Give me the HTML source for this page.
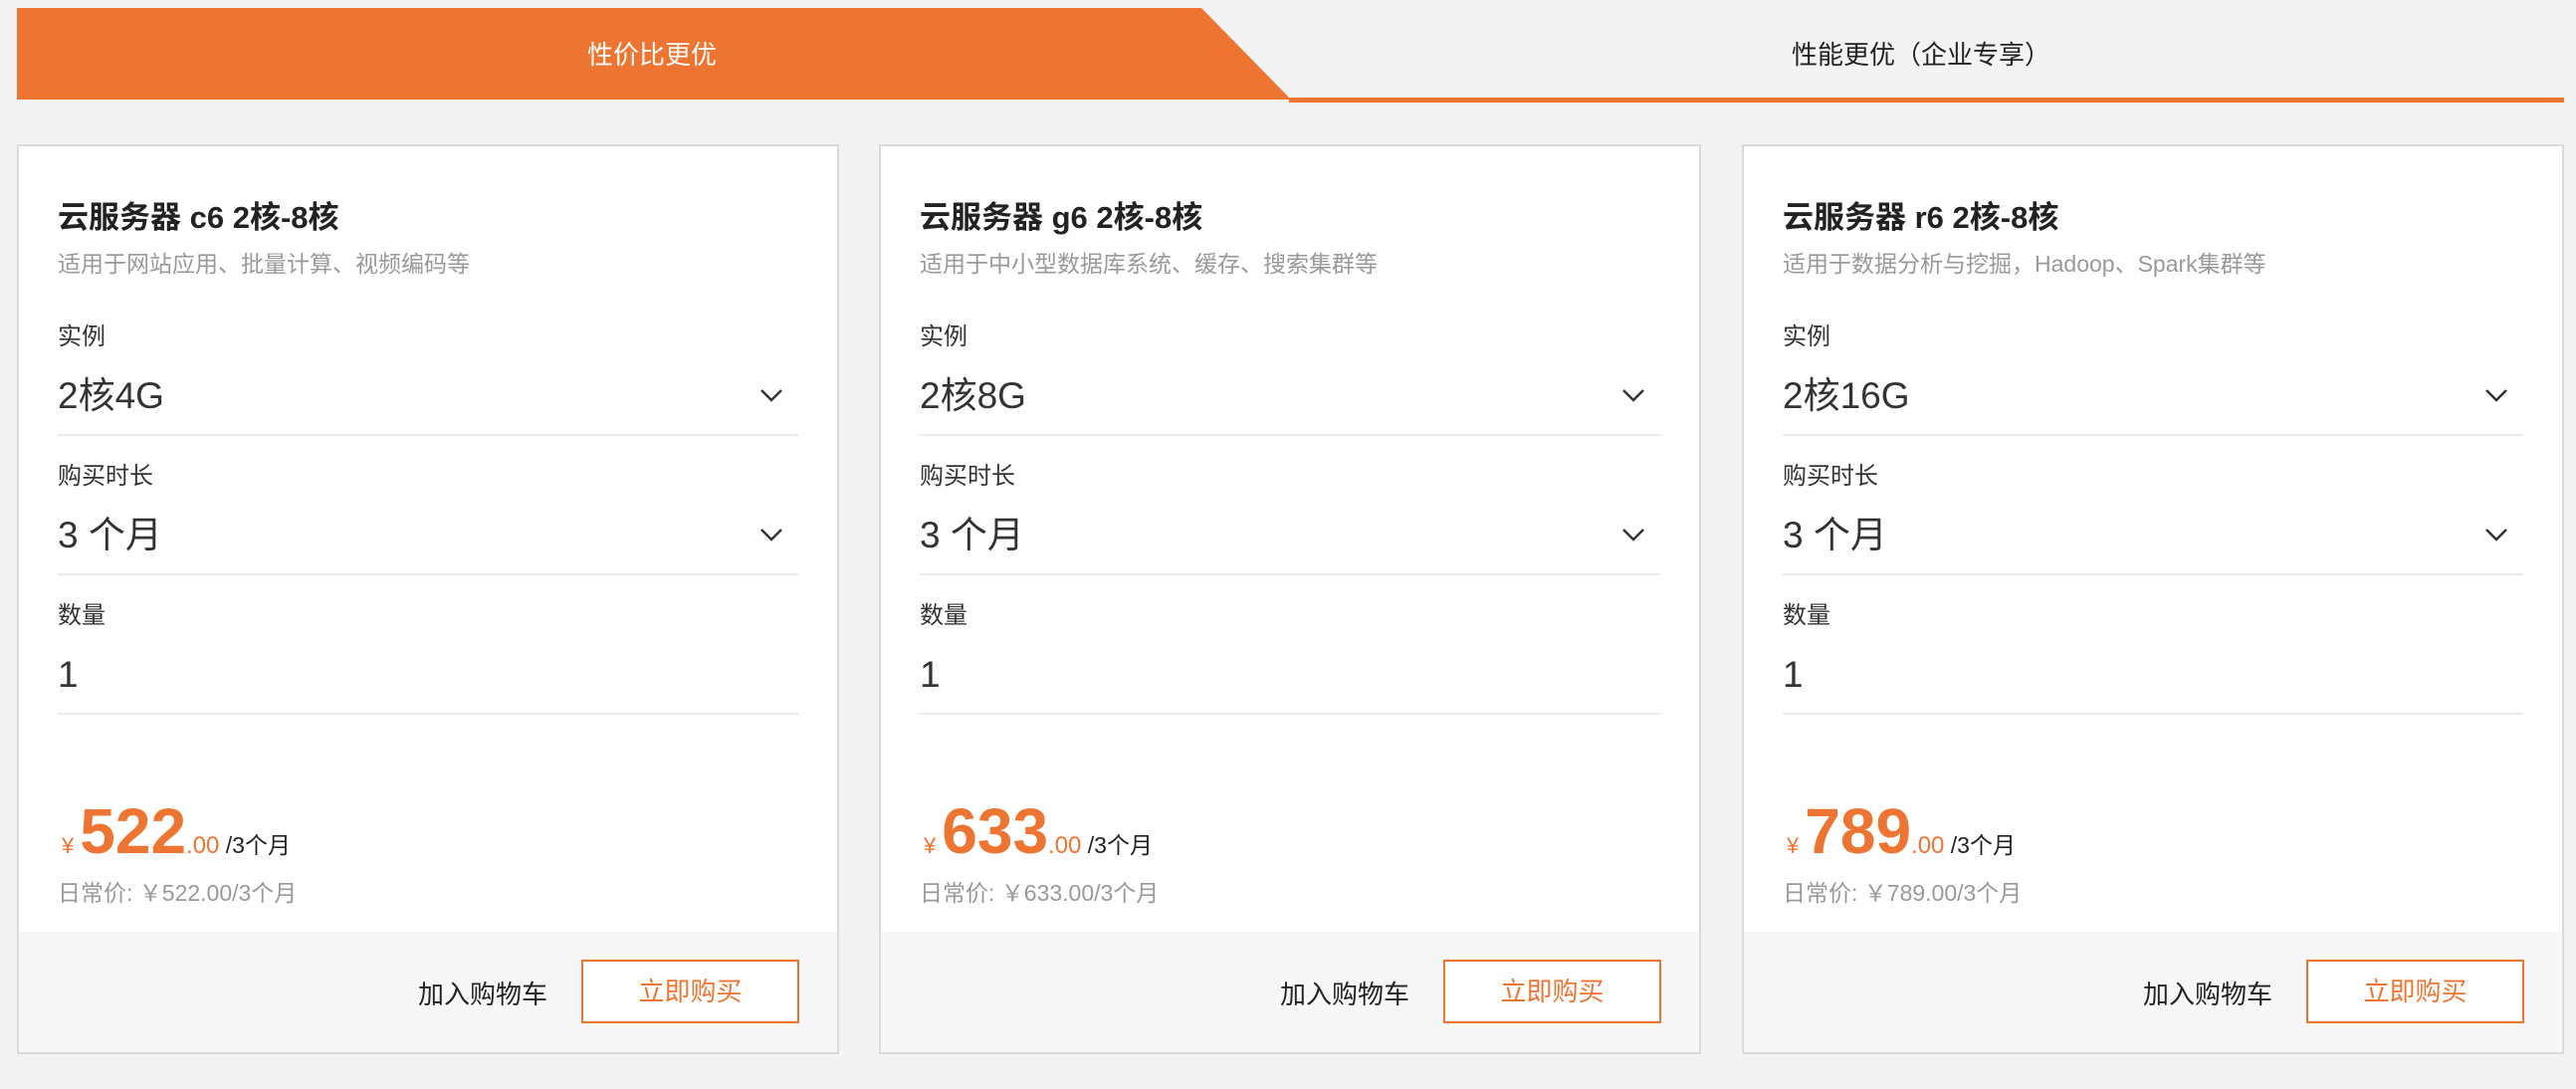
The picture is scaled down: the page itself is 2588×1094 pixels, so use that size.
<!DOCTYPE html>
<html><head><meta charset="utf-8"><style>
*{margin:0;padding:0;box-sizing:border-box}
body{width:2588px;height:1094px;background:#f3f3f3;font-family:"Liberation Sans","Noto Sans CJK SC",sans-serif;position:relative;overflow:hidden;color:#333}
.abs{position:absolute;white-space:nowrap}
.card{position:absolute;top:145px;width:826px;height:914px;background:#fff;border:2px solid #d9d9de}
.foot{position:absolute;left:0;right:0;bottom:0;height:121px;background:#f7f7f7}
.line{position:absolute;left:39px;width:744px;height:2px;background:#eaeaea}
.lbl{position:absolute;left:39px;font-size:24px;color:#333;line-height:1}
.val{position:absolute;left:39px;font-size:37px;color:#333;line-height:1}
.chev{position:absolute;left:744px;width:24px;height:14px}
</style></head><body>
<svg class="abs" style="left:0;top:0" width="2588" height="110">
<polygon points="17,8 1207,8 1297,100 17,100" fill="#ed7431"/>
<rect x="1295" y="98" width="1281" height="5" fill="#ed7431"/>
</svg>
<div class="abs" style="left:0;width:1310px;top:36px;text-align:center;color:#fff;font-size:26px;line-height:38px">性价比更优</div>
<div class="abs" style="left:1700px;width:460px;top:36px;text-align:center;color:#222;font-size:26px;line-height:38px">性能更优（企业专享）</div>

<div class="card" style="left:17px">
<div class="abs" style="left:39px;top:46px;font-size:31px;font-weight:bold;color:#222">云服务器 c6 2核-8核</div>
<div class="abs" style="left:39px;top:99px;font-size:23px;color:#999">适用于网站应用、批量计算、视频编码等</div>
<div class="lbl" style="top:180px">实例</div>
<div class="val" style="top:232px">2核4G</div>
<svg class="chev" style="top:243px"><polyline points="2,2 12,12 22,2" fill="none" stroke="#333" stroke-width="2.5"/></svg>
<div class="line" style="top:289px"></div>
<div class="lbl" style="top:320px">购买时长</div>
<div class="val" style="top:372px">3 个月</div>
<svg class="chev" style="top:383px"><polyline points="2,2 12,12 22,2" fill="none" stroke="#333" stroke-width="2.5"/></svg>
<div class="line" style="top:429px"></div>
<div class="lbl" style="top:460px">数量</div>
<div class="val" style="top:512px">1</div>
<div class="line" style="top:569px"></div>
<div class="abs" style="left:43px;top:656px;line-height:1;color:#ed7431"><span style="font-size:22px">¥</span><span style="font-size:64px;font-weight:bold;margin-left:6px">522</span><span style="font-size:24px">.00</span><span style="font-size:23px;color:#222"> /3个月</span></div>
<div class="abs" style="left:39px;top:731px;font-size:23px;color:#999">日常价: ￥522.00/3个月</div>
<div class="foot">
<div class="abs" style="left:401px;top:43px;font-size:26px;color:#222">加入购物车</div>
<div class="abs" style="left:565px;top:28px;width:219px;height:64px;border:2px solid #ed7431;background:#fff;color:#ed7431;font-size:26px;text-align:center;line-height:60px">立即购买</div>
</div>
</div>

<div class="card" style="left:883px">
<div class="abs" style="left:39px;top:46px;font-size:31px;font-weight:bold;color:#222">云服务器 g6 2核-8核</div>
<div class="abs" style="left:39px;top:99px;font-size:23px;color:#999">适用于中小型数据库系统、缓存、搜索集群等</div>
<div class="lbl" style="top:180px">实例</div>
<div class="val" style="top:232px">2核8G</div>
<svg class="chev" style="top:243px"><polyline points="2,2 12,12 22,2" fill="none" stroke="#333" stroke-width="2.5"/></svg>
<div class="line" style="top:289px"></div>
<div class="lbl" style="top:320px">购买时长</div>
<div class="val" style="top:372px">3 个月</div>
<svg class="chev" style="top:383px"><polyline points="2,2 12,12 22,2" fill="none" stroke="#333" stroke-width="2.5"/></svg>
<div class="line" style="top:429px"></div>
<div class="lbl" style="top:460px">数量</div>
<div class="val" style="top:512px">1</div>
<div class="line" style="top:569px"></div>
<div class="abs" style="left:43px;top:656px;line-height:1;color:#ed7431"><span style="font-size:22px">¥</span><span style="font-size:64px;font-weight:bold;margin-left:6px">633</span><span style="font-size:24px">.00</span><span style="font-size:23px;color:#222"> /3个月</span></div>
<div class="abs" style="left:39px;top:731px;font-size:23px;color:#999">日常价: ￥633.00/3个月</div>
<div class="foot">
<div class="abs" style="left:401px;top:43px;font-size:26px;color:#222">加入购物车</div>
<div class="abs" style="left:565px;top:28px;width:219px;height:64px;border:2px solid #ed7431;background:#fff;color:#ed7431;font-size:26px;text-align:center;line-height:60px">立即购买</div>
</div>
</div>

<div class="card" style="left:1750px">
<div class="abs" style="left:39px;top:46px;font-size:31px;font-weight:bold;color:#222">云服务器 r6 2核-8核</div>
<div class="abs" style="left:39px;top:99px;font-size:23px;color:#999">适用于数据分析与挖掘，Hadoop、Spark集群等</div>
<div class="lbl" style="top:180px">实例</div>
<div class="val" style="top:232px">2核16G</div>
<svg class="chev" style="top:243px"><polyline points="2,2 12,12 22,2" fill="none" stroke="#333" stroke-width="2.5"/></svg>
<div class="line" style="top:289px"></div>
<div class="lbl" style="top:320px">购买时长</div>
<div class="val" style="top:372px">3 个月</div>
<svg class="chev" style="top:383px"><polyline points="2,2 12,12 22,2" fill="none" stroke="#333" stroke-width="2.5"/></svg>
<div class="line" style="top:429px"></div>
<div class="lbl" style="top:460px">数量</div>
<div class="val" style="top:512px">1</div>
<div class="line" style="top:569px"></div>
<div class="abs" style="left:43px;top:656px;line-height:1;color:#ed7431"><span style="font-size:22px">¥</span><span style="font-size:64px;font-weight:bold;margin-left:6px">789</span><span style="font-size:24px">.00</span><span style="font-size:23px;color:#222"> /3个月</span></div>
<div class="abs" style="left:39px;top:731px;font-size:23px;color:#999">日常价: ￥789.00/3个月</div>
<div class="foot">
<div class="abs" style="left:401px;top:43px;font-size:26px;color:#222">加入购物车</div>
<div class="abs" style="left:565px;top:28px;width:219px;height:64px;border:2px solid #ed7431;background:#fff;color:#ed7431;font-size:26px;text-align:center;line-height:60px">立即购买</div>
</div>
</div>
</body></html>
